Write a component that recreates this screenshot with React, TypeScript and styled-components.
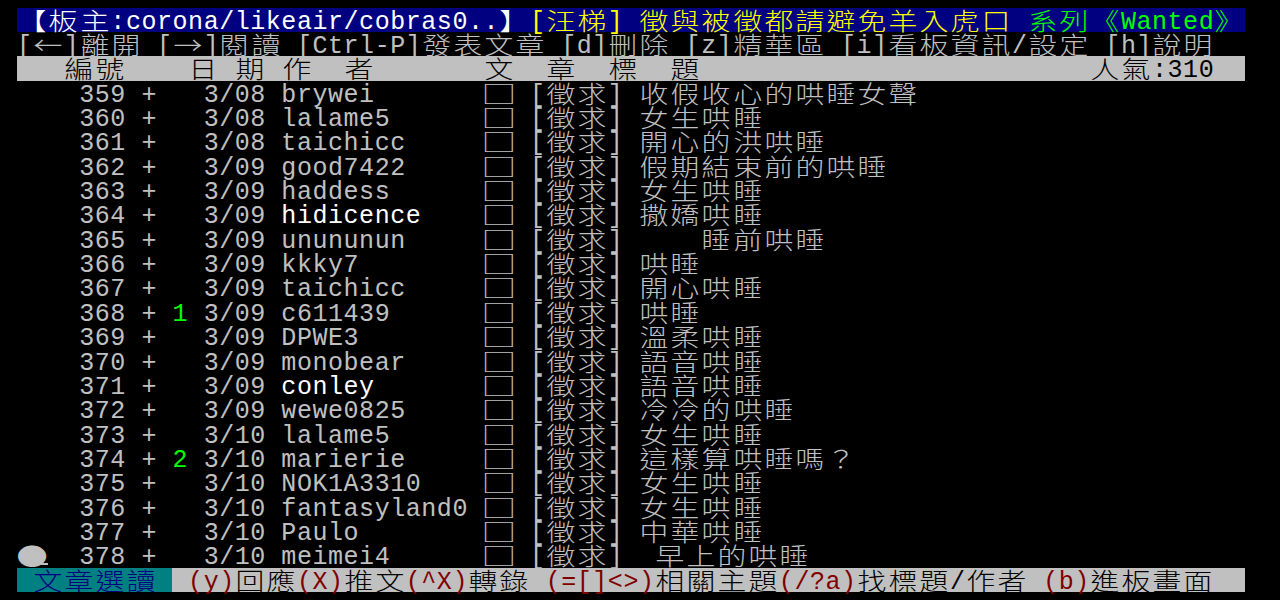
import styled, { createGlobalStyle } from "styled-components"

// the terminal shows 79 full columns; the glyph pitch is a bit wider than 1/80 of the view
const COLS = 79
const CELL_W = 15.555
const ROW_H = 24.35

const Color = {
	BLACK: "#000000",
	GRAY: "#c0c0c0",
	WHITE: "#ffffff",
	BLUE: "#000080",
	YELLOW: "#ffff00",
	GREEN: "#00ff00",
	TEAL: "#008080",
	RED: "#800000",
}

type Seg = { t: string; fg?: string; bg?: string }
type CellData = { ch: string; wide: boolean; fg: string; bg?: string; cursor?: boolean }

// everything from the arrows up is double width on the terminal
const isWide = (ch: string) => (ch.codePointAt(0) ?? 0) >= 0x2190
const colsOf = (s: string) => Array.from(s).reduce((n, ch) => n + (isWide(ch) ? 2 : 1), 0)
const padCols = (s: string, n: number) => s + " ".repeat(Math.max(0, n - colsOf(s)))

// some glyphs are drawn wider than the rest by the terminal font
const glyphStretch: Record<string, number> = { "□": 1.45, "●": 1.3 }

const toCells = (segs: Seg[], fill?: string): CellData[] => {
	const cells: CellData[] = []
	let col = 0
	for (const s of segs) {
		for (const ch of Array.from(s.t)) {
			const wide = isWide(ch)
			cells.push({ ch, wide, fg: s.fg ?? Color.GRAY, bg: s.bg })
			col += wide ? 2 : 1
		}
	}
	while (col < COLS) {
		cells.push({ ch: " ", wide: false, fg: Color.GRAY, bg: fill })
		col++
	}
	return cells
}

const posts: [number, string, string, string, string, boolean?][] = [
	[359, "", "3/08", "brywei", "收假收心的哄睡女聲"],
	[360, "", "3/08", "lalame5", "女生哄睡"],
	[361, "", "3/08", "taichicc", "開心的洪哄睡"],
	[362, "", "3/09", "good7422", "假期結束前的哄睡"],
	[363, "", "3/09", "haddess", "女生哄睡"],
	[364, "", "3/09", "hidicence", "撒嬌哄睡", true],
	[365, "", "3/09", "unununun", "　　睡前哄睡"],
	[366, "", "3/09", "kkky7", "哄睡"],
	[367, "", "3/09", "taichicc", "開心哄睡"],
	[368, "1", "3/09", "c611439", "哄睡"],
	[369, "", "3/09", "DPWE3", "溫柔哄睡"],
	[370, "", "3/09", "monobear", "語音哄睡"],
	[371, "", "3/09", "conley", "語音哄睡", true],
	[372, "", "3/09", "wewe0825", "冷冷的哄睡"],
	[373, "", "3/10", "lalame5", "女生哄睡"],
	[374, "2", "3/10", "marierie", "這樣算哄睡嗎？"],
	[375, "", "3/10", "NOK1A3310", "女生哄睡"],
	[376, "", "3/10", "fantasyland0", "女生哄睡"],
	[377, "", "3/10", "Paulo", "中華哄睡"],
	[378, "", "3/10", "meimei4", " 早上的哄睡"],
]

const titleBar = toCells(
	[
		{ t: "【板主:corona/likeair/cobras0..】", fg: Color.WHITE, bg: Color.BLUE },
		{ t: "[汪梯] 徵與被徵都請避免羊入虎口 ", fg: Color.YELLOW, bg: Color.BLUE },
		{ t: "系列《Wanted》", fg: Color.GREEN, bg: Color.BLUE },
	],
	Color.BLUE
)

const helpLine = toCells([{ t: "[←]離開 [→]閱讀 [Ctrl-P]發表文章 [d]刪除 [z]精華區 [i]看板資訊/設定 [h]說明" }])

const headerLine = toCells(
	[
		{ t: padCols("   編號    日 期 作  者       文  章  標  題", 69), fg: Color.BLACK, bg: Color.GRAY },
		{ t: "人氣:310", fg: Color.BLACK, bg: Color.GRAY },
	],
	Color.GRAY
)

const postLines = posts.map(([num, rec, date, author, title, bright], i) => {
	const isLast = i === posts.length - 1
	const cells = toCells([
		{ t: isLast ? "●" : "  " },
		{ t: `${String(num).padStart(5)} + ` },
		{ t: rec.padEnd(2), fg: Color.GREEN },
		{ t: `${date} ` },
		{ t: author.padEnd(12), fg: bright ? Color.WHITE : Color.GRAY },
		{ t: ` □ [徵求] ${title}` },
	])
	if (isLast) cells[0].cursor = true
	return cells
})

const key = (t: string): Seg => ({ t, fg: Color.RED, bg: Color.GRAY })
const label = (t: string): Seg => ({ t, fg: Color.BLACK, bg: Color.GRAY })

const footer = toCells(
	[
		{ t: " 文章選讀 ", fg: Color.BLUE, bg: Color.TEAL },
		label(" "),
		key("(y)"),
		label("回應"),
		key("(X)"),
		label("推文"),
		key("(^X)"),
		label("轉錄 "),
		key("(=[]<>)"),
		label("相關主題"),
		key("(/?a)"),
		label("找標題/作者 "),
		key("(b)"),
		label("進板畫面"),
	],
	Color.GRAY
)

const screen: CellData[][] = [titleBar, helpLine, headerLine, ...postLines, footer]

const GlobalStyle = createGlobalStyle`
	html, body {
		margin: 0;
		background: ${Color.BLACK};
	}
	body {
		width: 1280px;
		height: 600px;
		overflow: hidden;
	}
`

const Screen = styled.div`
	padding: 7.7px 0 0 16.8px;
`

const Row = styled.div`
	display: grid;
	grid-template-columns: repeat(${COLS}, ${CELL_W}px);
	height: ${ROW_H}px;
`

const Cell = styled.span<{ $wide: boolean; $fg: string; $bg?: string }>`
	position: relative;
	grid-column: span ${(p) => (p.$wide ? 2 : 1)};
	height: ${ROW_H}px;
	display: flex;
	justify-content: center;
	color: ${(p) => p.$fg};
	background: ${(p) => p.$bg ?? "transparent"};
	font-family: ${(p) => (p.$wide ? '"Noto Sans CJK TC", sans-serif' : '"Liberation Mono", monospace')};
	font-size: ${(p) => (p.$wide ? 24 : 25)}px;
	font-weight: ${(p) => (p.$wide ? 300 : 400)};
	line-height: ${(p) => (p.$wide ? ROW_H : 29)}px;
	white-space: pre;
`

const Glyph = styled.span<{ $sx: number }>`
	display: inline-block;
	transform: scaleX(${(p) => p.$sx});
`

const Cursor = styled.span`
	position: absolute;
	right: 0;
	bottom: 3px;
	width: 21px;
	height: 2px;
	background: ${Color.GRAY};
`

const App = () => {
	return (
		<>
			<GlobalStyle />
			<Screen>
				{screen.map((cells, r) => (
					<Row key={r}>
						{cells.map((c, i) => (
							<Cell key={i} $wide={c.wide} $fg={c.fg} $bg={c.bg}>
								<Glyph $sx={c.wide ? glyphStretch[c.ch] ?? 1.2 : 1}>{c.ch}</Glyph>
								{c.cursor && <Cursor />}
							</Cell>
						))}
					</Row>
				))}
			</Screen>
		</>
	)
}

export default App
